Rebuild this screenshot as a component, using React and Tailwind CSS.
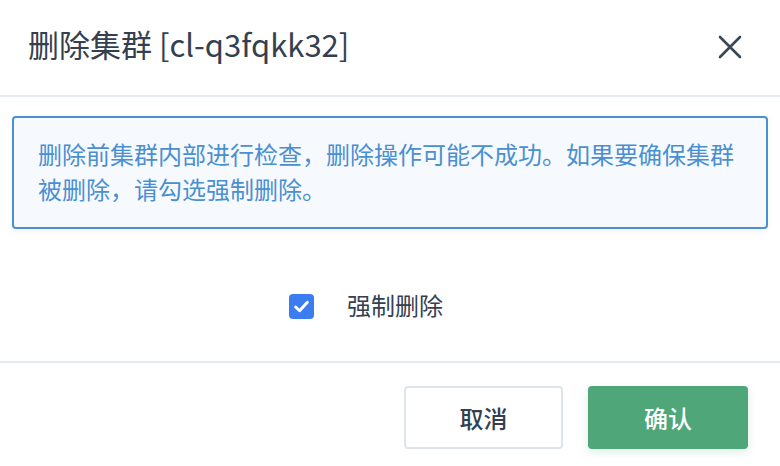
import React from 'react';

const font = { fontFamily: '"Noto Sans CJK SC", "Noto Sans", sans-serif' };

export default function App() {
  return (
    <div className="w-[780px] h-[466px] bg-white overflow-hidden" style={font}>
      <div className="h-[97px] flex items-center justify-between pl-[28px] pr-[38px] border-b-2 border-[#e6ebf2]">
        <h1 className="text-[31px] leading-none text-[#343f4f] pb-[8px]">删除集群 [cl-q3fqkk32]</h1>
        <button className="text-[#3b4656] pb-[2px]">
          <svg width="24" height="24" viewBox="0 0 24 24" fill="none" stroke="currentColor" strokeWidth="2.6" strokeLinecap="round">
            <path d="M2 2L22 22M22 2L2 22" />
          </svg>
        </button>
      </div>

      <div className="px-[12px] pt-[19px]">
        <div className="border-2 border-[#4a90d2] rounded-[4px] bg-[#f6faff] shadow-[0_2px_6px_rgba(0,0,0,0.06)] pl-[24px] pr-[20px] pt-[18px] pb-[21px] text-[24px] leading-[35px] text-[#4a8fd1]">
          删除前集群内部进行检查，删除操作可能不成功。如果要确保集群被删除，请勾选强制删除。
        </div>
      </div>

      <div className="h-[134px] flex items-start pt-[64px] pl-[289px] border-b-2 border-[#e6ebf2]">
        <div className="flex items-center gap-[33px]">
          <span className="shrink-0 w-[25px] h-[25px] rounded-[4px] bg-[#3b7cf0] flex items-center justify-center">
            <svg width="17" height="17" viewBox="0 0 16 16" fill="none" stroke="white" strokeWidth="2.8" strokeLinecap="round" strokeLinejoin="round">
              <path d="M2.5 8.5L6.2 12L13.5 4" />
            </svg>
          </span>
          <span className="text-[24px] leading-none text-[#343f4f] pb-[3px]">强制删除</span>
        </div>
      </div>

      <div className="flex justify-end gap-[25px] pt-[23px] pr-[32px]">
        <button className="w-[159px] h-[63px] rounded-[4px] border-2 border-[#dfe4ec] bg-white text-[24px] font-medium text-[#343f4f]">
          取消
        </button>
        <button className="w-[160px] h-[63px] rounded-[4px] bg-[#4fa679] text-[24px] font-medium text-white shadow-[0_3px_8px_rgba(79,166,121,0.2)]">
          确认
        </button>
      </div>
    </div>
  );
}
